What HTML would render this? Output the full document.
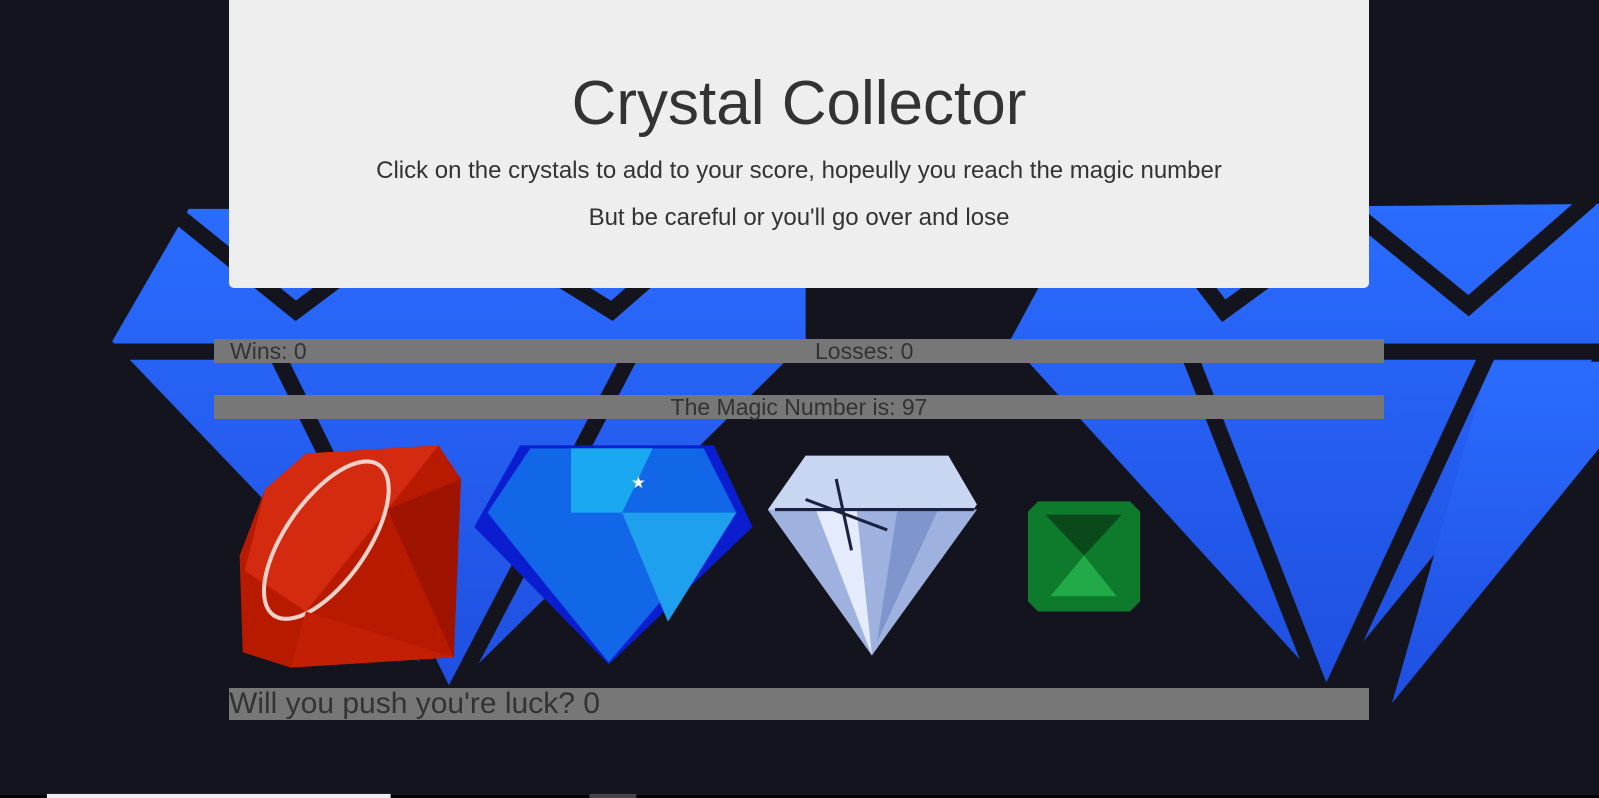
<!DOCTYPE html>
<html><head><meta charset="utf-8"><style>
html,body{margin:0;padding:0;width:1599px;height:798px;overflow:hidden;background:#14141f;font-family:"Liberation Sans",Arial,sans-serif;color:#333}
#bg{position:absolute;left:0;top:0}
.jumbo{position:absolute;left:229px;top:0;width:1140px;height:288px;background:#eeeeee;border-radius:0 0 5px 5px;text-align:center}
.jumbo h1{margin:0;position:absolute;top:68px;width:100%;font-size:62px;font-weight:400}
.jumbo p{position:absolute;width:100%;margin:0;font-size:24px}
.bar{position:absolute;background:#777;color:#333;font-size:23px;line-height:25px}
</style></head><body>
<svg id="bg" width="1599" height="798" viewBox="0 0 1568 783" preserveAspectRatio="none">
<defs><linearGradient id="bl" x1="0" y1="0" x2="0" y2="1"><stop offset="0" stop-color="#2a6cff"/><stop offset="1" stop-color="#1f4fe0"/></linearGradient></defs>
<rect width="1568" height="783" fill="#14141f"/>
<g fill="url(#bl)">
<polygon points="185,205 790,205 790,335 440,680 110,335"/>
<polygon points="1060,205 1568,200 1568,345 1300,675 990,335"/>
<polygon points="1568,355 1568,440 1365,690 1460,355"/>
</g>
<g stroke="#14141f" stroke-width="16" fill="none">
<line x1="100" y1="345" x2="800" y2="345"/>
<line x1="980" y1="345" x2="1568" y2="345"/>
<polyline points="160,200 290,305 430,200 600,305 720,200"/>
<line x1="270" y1="345" x2="440" y2="690"/>
<line x1="620" y1="345" x2="440" y2="690"/>
<polyline points="1120,200 1200,305 1330,210 1440,300 1560,195"/>
<line x1="1165" y1="345" x2="1300" y2="690"/>
<line x1="1460" y1="345" x2="1300" y2="690"/>
</g>
<rect x="0" y="780" width="1568" height="3" fill="#000"/>
<rect x="46" y="779" width="337" height="4" fill="#eee"/>
<rect x="578" y="779" width="46" height="4" fill="#444"/>
</svg>
<div class="jumbo">
<h1>Crystal Collector</h1>
<p style="top:157px">Click on the crystals to add to your score, hopeully you reach the magic number</p>
<p style="top:204px">But be careful or you'll go over and lose</p>
</div>
<div class="bar" style="left:214px;top:339px;width:1170px;height:24px"><span style="position:absolute;left:16px">Wins: 0</span><span style="position:absolute;left:601px">Losses: 0</span></div>
<div class="bar" style="left:214px;top:395px;width:1170px;height:24px;text-align:center">The Magic Number is: 97</div>
<svg style="position:absolute;left:0;top:0" width="1599" height="798" viewBox="0 0 1568 783" preserveAspectRatio="none">
<polygon points="300,445 430,437 452,470 445,645 285,655 238,640 235,545 260,480" fill="#b81a00"/>
<polygon points="260,480 300,445 430,437 380,500 300,600 240,560" fill="#d42a10"/>
<ellipse cx="320" cy="530" rx="40" ry="90" transform="rotate(35 320 530)" fill="none" stroke="#f3d0c8" stroke-width="4"/>
<polygon points="300,600 445,645 285,655" fill="#c21f05"/>
<polygon points="380,500 452,470 445,645" fill="#9e1400"/>
<polygon points="510,437 700,437 738,517 597,652 465,517" fill="#0a1ed0"/>
<polygon points="520,440 690,440 722,503 597,650 478,503" fill="#1266e8"/>
<polygon points="560,440 640,440 610,503 560,503" fill="#1aa8f0"/>
<polygon points="610,503 722,503 655,610" fill="#1ea0ee"/>
<text x="626" y="479" font-size="16" fill="#fff" text-anchor="middle">★</text>
<polygon points="790,447 930,447 958,495 855,643 753,500" fill="#c9d6f2"/>
<polygon points="753,500 958,500 855,643" fill="#9fb2df"/>
<polygon points="800,500 840,500 855,643" fill="#e4ebfa"/>
<polygon points="880,500 920,500 860,630" fill="#7f96cc"/>
<line x1="760" y1="500" x2="955" y2="500" stroke="#1a2240" stroke-width="3"/>
<line x1="820" y1="470" x2="835" y2="540" stroke="#1a2240" stroke-width="3"/>
<line x1="790" y1="490" x2="870" y2="520" stroke="#1a2240" stroke-width="3"/>
<polygon points="1018,492 1108,492 1118,502 1118,590 1108,600 1018,600 1008,590 1008,502" fill="#0d7a2c"/>
<polygon points="1025,505 1100,505 1063,545" fill="#0a4a1a"/>
<polygon points="1030,585 1095,585 1063,545" fill="#22aa48"/>
</svg>
<div class="bar" style="left:229px;top:688px;width:1140px;height:32px;font-size:30px;line-height:32px">Will you push you're luck? 0</div>
</body></html>
